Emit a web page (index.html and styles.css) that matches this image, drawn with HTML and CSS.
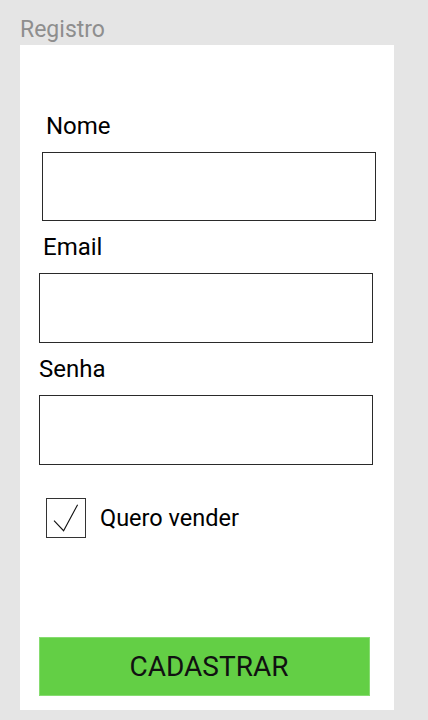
FILE: index.html
```html
<!DOCTYPE html>
<html lang="pt">
<head>
<meta charset="utf-8">
<title>Registro</title>
<link rel="stylesheet" href="styles.css">
</head>
<body>
<div class="title">Registro</div>
<form class="card">
  <label class="label label-nome" for="nome">Nome</label>
  <input class="field field-nome" id="nome" type="text">
  <label class="label label-email" for="email">Email</label>
  <input class="field field-email" id="email" type="email">
  <label class="label label-senha" for="senha">Senha</label>
  <input class="field field-senha" id="senha" type="password">
  <div class="check-row">
    <span class="checkbox">
      <svg width="40" height="40" viewBox="0 0 40 40"><polyline points="8,22.7 17.6,32.7 31.6,6.7" fill="none" stroke="#111" stroke-width="1.1"/></svg>
    </span>
    <span class="check-label">Quero vender</span>
  </div>
  <button class="submit" type="button">CADASTRAR</button>
</form>
</body>
</html>
```
FILE: styles.css
```css
* { box-sizing: border-box; }
html, body { margin: 0; padding: 0; }
body {
  background: #e5e5e5;
  font-family: Roboto, "Liberation Sans", sans-serif;
  width: 428px;
  height: 720px;
  overflow: hidden;
}
.title {
  padding: 16px 0 0 20px;
  height: 45px;
  font-size: 23px;
  line-height: 27px;
  color: #8e8e8e;
}
.card {
  margin-left: 20px;
  width: 374px;
  height: 665px;
  background: #fff;
  padding: 67px 0 14px 0;
  display: flex;
  flex-direction: column;
  align-items: flex-start;
}
.label {
  font-size: 24px;
  line-height: 28px;
  color: #000;
}
.label-nome { margin-left: 26px; }
.label-email { margin-left: 23px; margin-top: 12px; }
.label-senha { margin-left: 19px; margin-top: 12px; }
.field {
  display: block;
  margin: 12px 0 0 0;
  width: 334px;
  height: 70px;
  border: 1px solid #2a2a2a;
  background: #fff;
  padding: 0 8px;
  font: inherit;
  outline: none;
}
.field-nome { margin-left: 22px; height: 69px; }
.field-email, .field-senha { margin-left: 19px; }
.check-row {
  margin: 33px 0 0 26px;
  display: flex;
  align-items: center;
  gap: 14px;
}
.checkbox {
  width: 40px;
  height: 40px;
  border: 1px solid #333;
  display: block;
  position: relative;
}
.checkbox svg {
  position: absolute;
  left: -1px;
  top: -1px;
}
.check-label {
  font-size: 23.5px;
  line-height: 28px;
  color: #000;
}
.submit {
  margin: auto 0 0 19px;
  width: 331px;
  height: 59px;
  background: #63cf45;
  border: 1px solid #86dc70;
  font-family: Roboto, "Liberation Sans", sans-serif;
  font-size: 28px;
  color: #111;
  padding: 0 0 0 9px;
  cursor: pointer;
}
```
